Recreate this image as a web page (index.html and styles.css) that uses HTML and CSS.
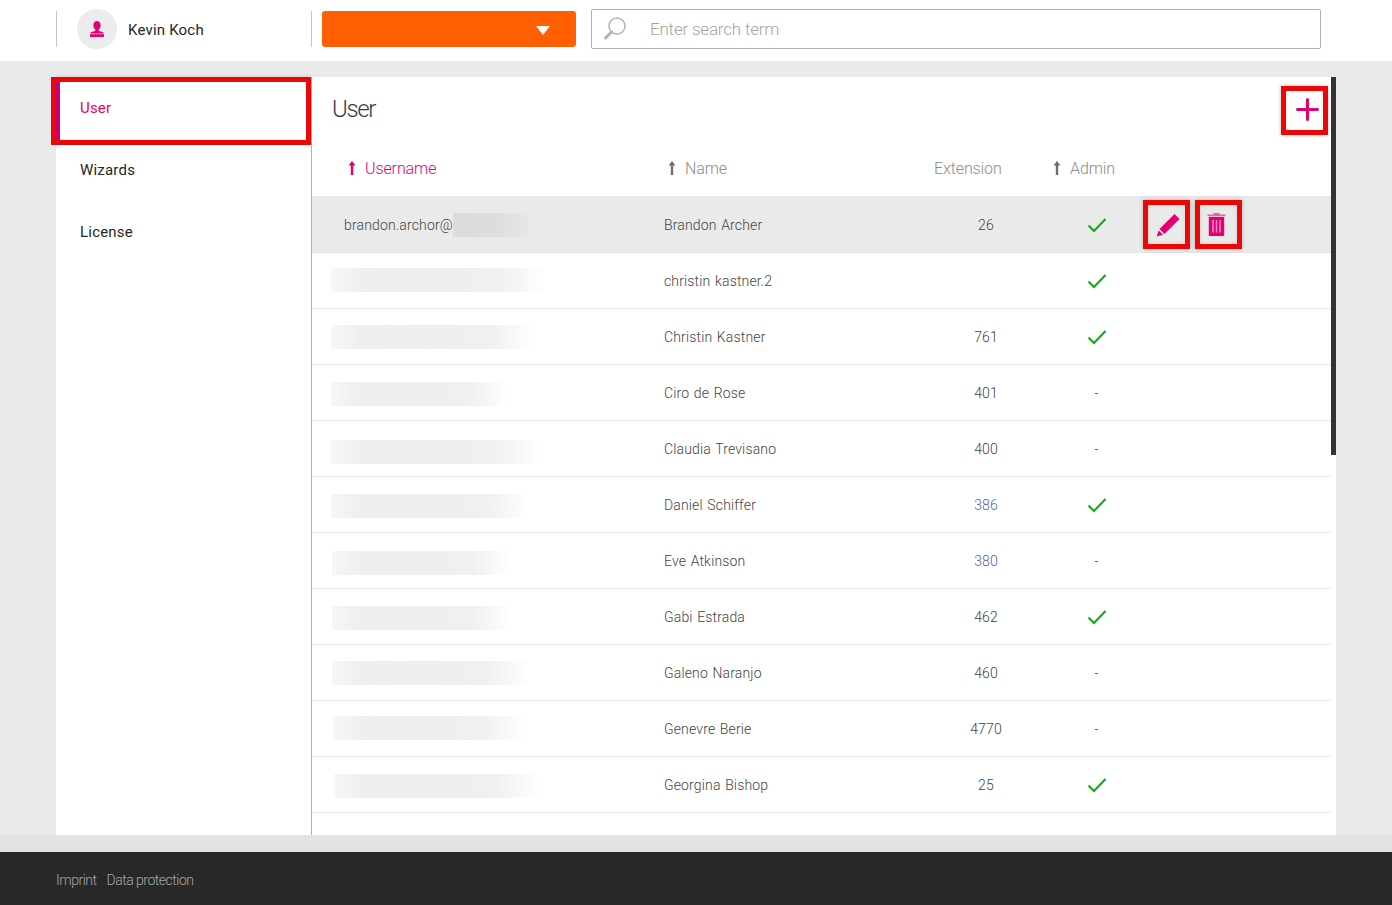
FILE: index.html
```html
<!DOCTYPE html>
<html lang="en">
<head>
  <meta charset="UTF-8" />
  <title>User administration</title>
  <link rel="stylesheet" href="styles.css">
</head>
<body>
  <!-- Top bar -->
  <header class="topbar">
    <div class="profile">
      <span class="avatar">
        <svg width="18" height="16" viewBox="0 0 18 16"><path d="M9 0c2.2 0 3.6 1.7 3.6 4.2 0 2-.9 3.6-2 4.4v1.1l4.4 1.6c.5.2.8.6.8 1.1H2.2c0-.5.3-.9.8-1.1l4.4-1.6V8.600c-1.100-.8-2-2.400-2-4.400C5.400 1.700 6.800 0 9 0z" fill="#e20074"/><rect x="2" y="13.200" width="14" height="2.800" fill="#e20074"/></svg>
      </span>
      <span class="profile-name">Kevin Koch</span>
    </div>
    <div class="dropdown"><span class="caret"></span></div>
    <div class="search">
      <svg class="search-icon" width="26" height="26" viewBox="0 0 26 26"><circle cx="15" cy="10" r="8" fill="none" stroke="#b4b4b4" stroke-width="1.500"/><path d="M9.500 16 3.500 22" stroke="#b4b4b4" stroke-width="3" stroke-linecap="round"/></svg>
      <span class="search-text">Enter search term</span>
    </div>
  </header>

  <!-- Sidebar and table -->
  <div class="content">
    <nav class="sidebar">
      <a class="nav-item active">User</a>
      <a class="nav-item">Wizards</a>
      <a class="nav-item">License</a>
    </nav>

    <main class="panel">
      <div class="panel-title">
        <h1>User</h1>
        <button class="mark-btn add-btn">
          <svg width="23" height="23" viewBox="0 0 23 23"><path d="M11.500 1.500v20M1.500 11.500h20" stroke="#e20074" stroke-width="3" stroke-linecap="round"/></svg>
        </button>
      </div>

      <div class="row head">
        <span class="sort sort-user active-sort"><svg class="arrow" width="8" height="14" viewBox="0 0 8 14"><path d="M4 0 7.500 4.500H5.200V14H2.800V4.500H.5z"/></svg>Username</span>
        <span class="sort sort-name"><svg class="arrow" width="8" height="14" viewBox="0 0 8 14"><path d="M4 0 7.500 4.500H5.200V14H2.800V4.500H.5z"/></svg>Name</span>
        <span class="sort sort-ext">Extension</span>
        <span class="sort sort-admin"><svg class="arrow" width="8" height="14" viewBox="0 0 8 14"><path d="M4 0 7.500 4.500H5.200V14H2.800V4.500H.5z"/></svg>Admin</span>
      </div>

      <div class="row selected">
        <span class="user-cell"><span class="mail">brandon.archor@</span><span class="blur blur-dark" style="width:84px"></span></span>
        <span>Brandon Archer</span>
        <span class="center">26</span>
        <span class="center"><svg class="check" width="20" height="16" viewBox="0 0 20 16"><path d="M1.500 8.500 7 14 18.500 2" fill="none" stroke="#13a813" stroke-width="2"/></svg></span>
        <span class="actions">
          <button class="mark-btn edit-btn">
            <svg width="24" height="24" viewBox="0 0 24 24"><path d="M18.500 1 23.500 6 8.500 21 3.500 16z" fill="#e20074"/><path d="M2.700 17.500 7 21.800.7 23.500z" fill="#e20074"/></svg>
          </button>
          <button class="mark-btn trash-btn">
            <svg width="19" height="23" viewBox="0 0 19 23"><path d="M6.500 0h6v1.500h6V3.200H.5V1.500h6z" fill="#ee5ea6"/><path d="M1.800 4h15.400v19H1.800z" fill="#e20074"/><path d="M6 7v12.500M9.500 7v12.500M13 7v12.500" stroke="#f48cc0" stroke-width="1.500"/></svg>
          </button>
        </span>
      </div>

      <div class="row">
        <span class="user-cell"><span class="blur" style="width:215px;transform:translate(-1px,-1px)"></span></span>
        <span>christin kastner.2</span>
        <span class="center"></span>
        <span class="center"><svg class="check" width="20" height="16" viewBox="0 0 20 16"><path d="M1.500 8.500 7 14 18.500 2" fill="none" stroke="#13a813" stroke-width="2"/></svg></span>
      </div>
      <div class="row">
        <span class="user-cell"><span class="blur" style="width:204px;transform:translate(-1px,0)"></span></span>
        <span>Christin Kastner</span>
        <span class="center">761</span>
        <span class="center"><svg class="check" width="20" height="16" viewBox="0 0 20 16"><path d="M1.500 8.500 7 14 18.500 2" fill="none" stroke="#13a813" stroke-width="2"/></svg></span>
      </div>
      <div class="row">
        <span class="user-cell"><span class="blur" style="width:177px;transform:translate(-1px,1px)"></span></span>
        <span>Ciro de Rose</span>
        <span class="center">401</span>
        <span class="center">-</span>
      </div>
      <div class="row">
        <span class="user-cell"><span class="blur" style="width:209px;transform:translate(-1px,3px)"></span></span>
        <span>Claudia Trevisano</span>
        <span class="center">400</span>
        <span class="center">-</span>
      </div>
      <div class="row">
        <span class="user-cell"><span class="blur" style="width:199px;transform:translate(-1px,1px)"></span></span>
        <span>Daniel Schiffer</span>
        <span class="center phone">386</span>
        <span class="center"><svg class="check" width="20" height="16" viewBox="0 0 20 16"><path d="M1.500 8.500 7 14 18.500 2" fill="none" stroke="#13a813" stroke-width="2"/></svg></span>
      </div>
      <div class="row">
        <span class="user-cell"><span class="blur" style="width:180px;transform:translateY(2px)"></span></span>
        <span>Eve Atkinson</span>
        <span class="center phone">380</span>
        <span class="center">-</span>
      </div>
      <div class="row">
        <span class="user-cell"><span class="blur" style="width:180px;transform:translateY(1px)"></span></span>
        <span>Gabi Estrada</span>
        <span class="center">462</span>
        <span class="center"><svg class="check" width="20" height="16" viewBox="0 0 20 16"><path d="M1.500 8.500 7 14 18.500 2" fill="none" stroke="#13a813" stroke-width="2"/></svg></span>
      </div>
      <div class="row">
        <span class="user-cell"><span class="blur" style="width:198px"></span></span>
        <span>Galeno Naranjo</span>
        <span class="center">460</span>
        <span class="center">-</span>
      </div>
      <div class="row">
        <span class="user-cell"><span class="blur" style="width:192px;transform:translate(1px,-1px)"></span></span>
        <span>Genevre Berie</span>
        <span class="center">4770</span>
        <span class="center">-</span>
      </div>
      <div class="row">
        <span class="user-cell"><span class="blur" style="width:206px;transform:translate(2px,1px)"></span></span>
        <span>Georgina Bishop</span>
        <span class="center">25</span>
        <span class="center"><svg class="check" width="20" height="16" viewBox="0 0 20 16"><path d="M1.500 8.500 7 14 18.500 2" fill="none" stroke="#13a813" stroke-width="2"/></svg></span>
      </div>

      <div class="scrollbar"></div>
    </main>
  </div>

  <div class="strip"></div>

  <footer class="footer">
    <a>Imprint</a>
    <a>Data protection</a>
  </footer>
</body>
</html>
```

FILE: styles.css
```css
* {
  margin: 0;
  padding: 0;
  box-sizing: border-box;
}

html, body {
  height: 100%;
  overflow: hidden;
}

body {
  display: flex;
  flex-direction: column;
  font-family: Roboto, 'Liberation Sans', sans-serif;
  background-color: #eaeaea;
  color: #262626;
}

/* Top bar */
.topbar {
  display: flex;
  align-items: center;
  height: 61px;
  padding: 0 0 3px 56px;
  background-color: #fff;
}

.profile {
  display: flex;
  align-items: center;
  width: 256px;
  height: 36px;
  border-left: 1px solid #c4c4c4;
  border-right: 1px solid #c4c4c4;
  padding-left: 20px;
}

.avatar {
  display: flex;
  align-items: center;
  justify-content: center;
  width: 40px;
  height: 40px;
  border-radius: 50%;
  background-color: #ececec;
  flex-shrink: 0;
}

.profile-name {
  margin: 2px 0 0 11px;
  font-size: 15px;
  letter-spacing: 0.2px;
}

.dropdown {
  display: flex;
  align-items: center;
  justify-content: flex-end;
  width: 254px;
  height: 36px;
  margin-left: 10px;
  padding-right: 26px;
  border-radius: 3px;
  background-color: #ff5f00;
}

.caret {
  width: 0;
  height: 0;
  margin-top: 3px;
  border-left: 7px solid transparent;
  border-right: 7px solid transparent;
  border-top: 9px solid #fff;
}

.search {
  display: flex;
  align-items: center;
  width: 730px;
  height: 40px;
  margin-left: 15px;
  padding-left: 10px;
  border: 1px solid #b0b0b0;
  border-radius: 2px;
}

.search-icon {
  flex-shrink: 0;
}

.search-text {
  margin-left: 22px;
  font-size: 17px;
  font-weight: 300;
  letter-spacing: -0.2px;
  color: #a4a4a4;
}

/* Main area */
.content {
  display: flex;
  height: 758px;
  margin: 16px 56px 0;
}

.sidebar {
  width: 255px;
  background-color: #fff;
  flex-shrink: 0;
}

.nav-item {
  position: relative;
  display: flex;
  align-items: center;
  height: 62px;
  padding-left: 24px;
  font-size: 15px;
  letter-spacing: 0.2px;
}

.nav-item.active {
  color: #e20074;
  box-shadow: 0 0 4px rgba(0, 0, 0, 0.15);
}

.nav-item.active::before {
  content: "";
  position: absolute;
  left: 0;
  top: 5px;
  bottom: -1px;
  width: 4px;
  background-color: #c4007a;
}

.nav-item.active::after {
  content: "";
  position: absolute;
  left: -5px;
  right: 0;
  top: 0;
  bottom: -6px;
  border: 5px solid #e90707;
}

.panel {
  position: relative;
  flex: 1;
  overflow: hidden;
  border-left: 1px solid #b0b0b0;
  padding-right: 5px;
  background-color: #fff;
}

.panel-title {
  display: flex;
  justify-content: space-between;
  height: 63px;
  padding: 0 3px 0 20px;
}

.panel-title h1 {
  align-self: center;
  font-size: 24px;
  font-weight: 300;
  letter-spacing: -1.4px;
  color: #3a3a3a;
}

.mark-btn {
  display: flex;
  align-items: center;
  justify-content: center;
  width: 47px;
  height: 49px;
  border: 5px solid #e90707;
  background: none;
  box-shadow: 0 0 4px rgba(0, 0, 0, 0.25), inset 0 0 4px rgba(0, 0, 0, 0.1);
}

.add-btn {
  margin-top: 9px;
  padding: 0 0 2px 5px;
}

.edit-btn {
  padding-left: 2px;
}

.trash-btn {
  padding-right: 5px;
}

.row {
  display: grid;
  grid-template-columns: 352px 258px 128px 93px 1fr;
  align-items: center;
  height: 56px;
  border-bottom: 1px solid #e4e4e4;
  font-size: 14px;
  font-weight: 300;
  letter-spacing: 0.15px;
  word-spacing: 1px;
  color: #444;
}

.row.head {
  height: 57px;
  font-size: 16px;
  letter-spacing: -0.1px;
  color: #8c8c8c;
}

.row.selected {
  background-color: #eaeaea;
}

.sort {
  display: flex;
  align-items: center;
  gap: 9px;
}

.arrow {
  fill: #6e6e6e;
}

.sort-user {
  padding-left: 36px;
  color: #e20074;
}

.sort-user .arrow {
  fill: #e20074;
}

.sort-name {
  padding-left: 4px;
}

.sort-ext {
  padding-left: 12px;
}

.sort-admin {
  padding-left: 3px;
}

.user-cell {
  display: flex;
  align-items: center;
  padding-left: 20px;
}

.selected .user-cell {
  padding-left: 32px;
}

.mail {
  white-space: nowrap;
}

.center {
  display: flex;
  justify-content: center;
}

.phone {
  color: #4a62b4;
}

.check {
  display: block;
}

.blur {
  display: block;
  height: 24px;
  background: linear-gradient(90deg, #f7f7f7, #efefef 14%, #eeeeee 50%, #f0f0f0 78%, #fff);
}

.blur-dark {
  background: linear-gradient(90deg, #dcdcdc, #dddddd 50%, #eaeaea);
}

.actions {
  display: flex;
  gap: 5px;
}

.scrollbar {
  position: absolute;
  top: 0;
  right: 0;
  width: 5px;
  height: 378px;
  background-color: #333;
}

/* Footer */
.strip {
  height: 17px;
  background-color: #e3e3e3;
}

.footer {
  display: flex;
  align-items: center;
  gap: 10px;
  height: 53px;
  padding: 2px 0 0 56px;
  background-color: #282828;
  font-size: 14px;
  font-weight: 300;
  letter-spacing: -0.5px;
  color: #a8a8a8;
}
```
